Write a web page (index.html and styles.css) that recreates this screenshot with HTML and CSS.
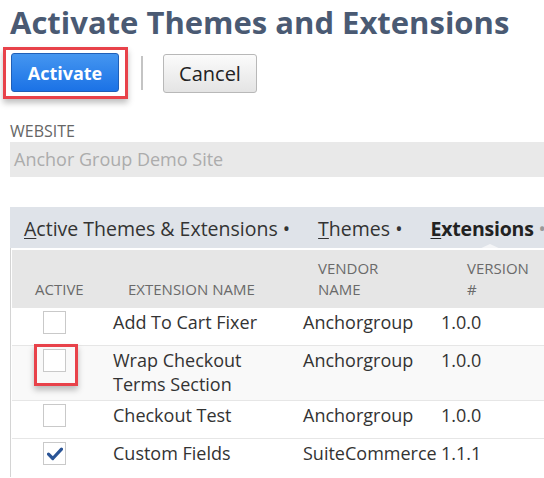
FILE: index.html
```html
<!DOCTYPE html>
<html>
<head>
<meta charset="utf-8">
<link rel="stylesheet" href="styles.css">
</head>
<body>
<div class="page">
  <h1 class="title">Activate Themes and Extensions</h1>
  <div class="actions">
    <div class="highlight-box">
      <button class="btn btn-primary">Activate</button>
    </div>
    <span class="sep"></span>
    <button class="btn btn-secondary">Cancel</button>
  </div>
  <div class="field">
    <div class="field-label">WEBSITE</div>
    <div class="field-input">Anchor Group Demo Site</div>
  </div>
  <div class="tabs">
    <span class="tab"><u>A</u>ctive Themes &amp; Extensions <span class="dot">•</span></span>
    <span class="tab"><u>T</u>hemes <span class="dot">•</span></span>
    <span class="tab tab-active"><u>E</u>xtensions <span class="dot dot-muted">•</span></span>
  </div>
  <div class="table">
    <div class="row head">
      <div class="cell h1c">ACTIVE</div>
      <div class="cell h2c">EXTENSION NAME</div>
      <div class="cell h3c">VENDOR<br>NAME</div>
      <div class="cell h4c">VERSION<br>#</div>
    </div>
    <div class="row">
      <div class="cell c1"><span class="cb"></span></div>
      <div class="cell">Add To Cart Fixer</div>
      <div class="cell">Anchorgroup</div>
      <div class="cell">1.0.0</div>
    </div>
    <div class="row alt">
      <div class="cell c1"><span class="cb marked"></span></div>
      <div class="cell">Wrap Checkout<br>Terms Section</div>
      <div class="cell">Anchorgroup</div>
      <div class="cell">1.0.0</div>
    </div>
    <div class="row">
      <div class="cell c1"><span class="cb"></span></div>
      <div class="cell">Checkout Test</div>
      <div class="cell">Anchorgroup</div>
      <div class="cell">1.0.0</div>
    </div>
    <div class="row last">
      <div class="cell c1"><span class="cb checked"><svg viewBox="0 0 16 14" width="16" height="14"><path d="M1.5 7.2 L5.8 11.5 L14.5 2.2" fill="none" stroke="#2a5496" stroke-width="3.2" stroke-linecap="round" stroke-linejoin="round"/></svg></span></div>
      <div class="cell">Custom Fields</div>
      <div class="cell">SuiteCommerce</div>
      <div class="cell">1.1.1</div>
    </div>
  </div>
</div>
</body>
</html>
```

FILE: styles.css
```css
* { box-sizing: border-box; }
html, body { margin: 0; padding: 0; background: #fff; }
body {
  font-family: "Open Sans", "DejaVu Sans", sans-serif;
  color: #333;
  overflow: hidden;
  width: 544px;
  height: 478px;
}
.page { padding-left: 10px; }

.title {
  margin: 0;
  font-size: 31px;
  font-weight: 700;
  line-height: 45px;
  color: #4a5a73;
  white-space: nowrap;
}

.actions {
  display: flex;
  align-items: center;
  margin-top: 2px;
  margin-left: -7px;
}
.highlight-box {
  border: 3px solid #e8424a;
  padding: 3px 6px 4px 5px;
  box-shadow: 0 4px 6px rgba(0,0,0,0.25);
}
.btn {
  font-family: "Open Sans", "DejaVu Sans", sans-serif;
  height: 39px;
  border-radius: 3px;
  padding: 0;
  display: block;
  cursor: pointer;
}
.btn-primary {
  width: 108px;
  font-size: 18px;
  font-weight: 700;
  color: #fff;
  background: linear-gradient(#4596f0, #1b72e6);
  border: 1px solid #1f5fb8;
}
.sep {
  width: 2px;
  height: 34px;
  background: #c4c4c4;
  margin: 0 20px 0 13px;
}
.btn-secondary {
  width: 94px;
  font-size: 20px;
  font-weight: 400;
  color: #222;
  background: linear-gradient(#fbfbfb, #e4e4e4);
  border: 1px solid #b8b8b8;
}

.field { margin-top: 22px; }
.field-label {
  font-size: 16px;
  line-height: 20px;
  color: #666;
}
.field-input {
  margin-top: 1px;
  height: 35px;
  background: #e9e9e9;
  color: #acacac;
  font-size: 18px;
  line-height: 35px;
  padding-left: 4px;
  white-space: nowrap;
}

.tabs {
  margin-top: 30px;
  height: 41px;
  padding-top: 3px;
  background: #dfe3e9;
  display: flex;
  align-items: center;
  gap: 28px;
  padding-left: 14px;
  font-size: 19.5px;
  white-space: nowrap;
  position: relative;
  overflow: hidden;
}
.tab { color: #333; line-height: 24px; }
.tab u { text-decoration-thickness: 1px; text-underline-offset: 2px; }
.dot { font-weight: 400; }
.dot-muted { color: #999; }
.tab-active { font-weight: 700; position: relative; color: #222; letter-spacing: -0.2px; }
.tab-active::after {
  content: "";
  position: absolute;
  left: 45px;
  bottom: -10px;
  border-left: 15px solid transparent;
  border-right: 15px solid transparent;
  border-bottom: 7px solid #f4f5f7;
}

.table {
  border-left: 1px solid #d4d4d4;
  padding: 2px 0 0 1px;
  width: 534px;
}
.row {
  display: grid;
  grid-template-columns: 101px 190px 138px 1fr;
  font-size: 18px;
  line-height: 24px;
  min-height: 38px;
  padding: 2px 0 4px;
  border-bottom: 1px solid #e6e6e6;
  background: #fff;
  white-space: nowrap;
}
.row.alt { background: #f9f9f9; }
.row.last { border-bottom: none; }
.row.head {
  background: #e6e6e6;
  height: 58px;
  padding: 0 0 8px;
  align-items: end;
  font-size: 15px;
  line-height: 21px;
  color: #6a6a6a;
  border-bottom: none;
}
.h1c { padding-left: 23px; }
.h2c { padding-left: 15px; }
.h3c { padding-left: 15px; }
.h4c { padding-left: 26px; }

.c1 { padding-left: 31px; }
.cb {
  display: flex;
  align-items: center;
  justify-content: center;
  width: 23px;
  height: 23px;
  margin-top: 1px;
  border: 1px solid #c9c9c9;
  background: #fff;
  position: relative;
}
.cb.marked::after {
  content: "";
  position: absolute;
  left: -10px;
  top: -6px;
  width: 38px;
  height: 36px;
  border: 3px solid #e8424a;
  box-shadow: 0 4px 6px rgba(0,0,0,0.25);
}
```
